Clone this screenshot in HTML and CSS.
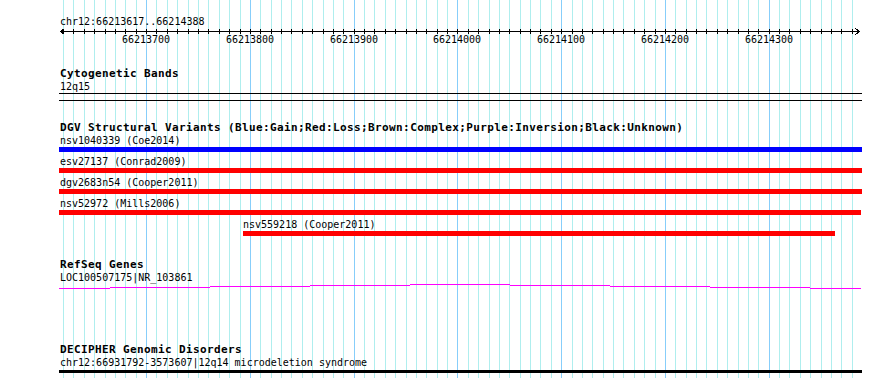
FILE: index.html
```html
<!DOCTYPE html>
<html lang="en">
<head>
  <meta charset="UTF-8">
  <title>chr12:66213617..66214388</title>
  <link rel="stylesheet" href="styles.css">
</head>
<body>
  <div class="browser">
    <svg class="grid" id="grid" width="890" height="378"></svg>
    <div class="tracks">
      <div class="locus">chr12:66213617..66214388</div>
      <svg class="ruler" id="ruler" width="890" height="22">
        <line x1="60" y1="3.5" x2="860" y2="3.5"/>
        <polyline points="64.5,0.5 60.5,3.5 64.5,6.5"/>
        <polyline points="855.5,0.5 859.5,3.5 855.5,6.5"/>
        <text x="146" y="15">66213700</text>
        <text x="250" y="15">66213800</text>
        <text x="354" y="15">66213900</text>
        <text x="457" y="15">66214000</text>
        <text x="561" y="15">66214100</text>
        <text x="665" y="15">66214200</text>
        <text x="769" y="15">66214300</text>
      </svg>

      <section class="track cyto">
        <h3>Cytogenetic Bands</h3>
        <div class="label">12q15</div>
        <div class="band"></div>
      </section>

      <section class="track dgv">
        <h3>DGV Structural Variants (Blue:Gain;Red:Loss;Brown:Complex;Purple:Inversion;Black:Unknown)</h3>
        <div class="feats">
          <div class="feat">
            <div class="label">nsv1040339 (Coe2014)</div>
            <div class="bar gain" style="margin-left:59px;width:803px"></div>
          </div>
          <div class="feat">
            <div class="label">esv27137 (Conrad2009)</div>
            <div class="bar loss" style="margin-left:59px;width:803px"></div>
          </div>
          <div class="feat">
            <div class="label">dgv2683n54 (Cooper2011)</div>
            <div class="bar loss" style="margin-left:59px;width:803px"></div>
          </div>
          <div class="feat">
            <div class="label">nsv52972 (Mills2006)</div>
            <div class="bar loss" style="margin-left:59px;width:802px"></div>
          </div>
          <div class="feat">
            <div class="label" style="padding-left:243px">nsv559218 (Cooper2011)</div>
            <div class="bar loss" style="margin-left:243px;width:592px"></div>
          </div>
        </div>
      </section>

      <section class="track refseq">
        <h3>RefSeq Genes</h3>
        <div class="label">LOC100507175|NR_103861</div>
        <svg class="gene" width="890" height="6">
          <path d="M59 4.5H110M110 3.5H210M210 2.5H310M310 1.5H410M410 0.5H510M510 1.5H610M610 2.5H710M710 3.5H810M810 4.5H861"/>
        </svg>
      </section>

      <section class="track decipher">
        <h3>DECIPHER Genomic Disorders</h3>
        <div class="label">chr12:66931792-3573607|12q14 microdeletion syndrome</div>
        <div class="bar unknown" style="margin-left:59px;width:803px"></div>
      </section>
    </div>
  </div>

  <script>
    const start = 66213617, end = 66214388;
    const toX = bp => 60 + (bp - start) * 800 / (end - start);
    const NS = 'http://www.w3.org/2000/svg';
    const grid = document.getElementById('grid');
    const ruler = document.getElementById('ruler');

    function addLine(svg, x, y1, y2, cls) {
      const l = document.createElementNS(NS, 'line');
      l.setAttribute('x1', x);
      l.setAttribute('x2', x);
      l.setAttribute('y1', y1);
      l.setAttribute('y2', y2);
      if (cls) l.setAttribute('class', cls);
      svg.appendChild(l);
    }

    for (let bp = Math.ceil(start / 10) * 10; bp <= end; bp += 10) {
      const x = Math.round(toX(bp)) + 0.5;
      addLine(grid, x, 0, 378, bp % 100 === 0 ? 'major' : 'minor');
      addLine(ruler, x, 1, 6);
    }
  </script>
</body>
</html>
```

FILE: styles.css
```css
body { margin: 0; background: #fff; }
.browser {
  position: relative; width: 890px; height: 378px; overflow: hidden;
  font-family: "DejaVu Sans Mono", monospace; font-size: 10px; color: #000;
}
.grid { position: absolute; top: 0; left: 0; shape-rendering: crispEdges; }
.grid .minor { stroke: #afeeee; }
.grid .major { stroke: #87cefa; }
.tracks { position: relative; }

.locus { padding: 15px 0 0 60px; line-height: 13px; }
.ruler { display: block; }
.ruler line, .ruler polyline { stroke: #000; fill: none; shape-rendering: crispEdges; }
.ruler text { font: 10px "DejaVu Sans Mono", monospace; text-anchor: middle; fill: #000; }

.track h3 {
  margin: 0; padding-left: 60px; font-size: 11px; font-weight: bold;
  line-height: 12px; letter-spacing: 0.38px; white-space: nowrap;
}
.label { padding-left: 60px; line-height: 13px; white-space: nowrap; }

.cyto { margin-top: 18px; }
.band { margin-left: 59px; width: 803px; height: 6px; border-top: 1px solid #000; border-bottom: 1px solid #000; }

.dgv { margin-top: 21px; }
.feats { padding-top: 1px; }
.feat .label { line-height: 12px; }
.feat { margin-bottom: 4px; }
.bar { height: 5px; }
.gain { background: #0000ff; }
.loss { background: #ff0000; }
.unknown { background: #000; height: 3px; margin-top: 1px; }

.refseq { margin-top: 23px; }
.gene { display: block; }
.gene path { stroke: #ff00ff; fill: none; shape-rendering: crispEdges; }

.decipher { margin-top: 54px; }
```
